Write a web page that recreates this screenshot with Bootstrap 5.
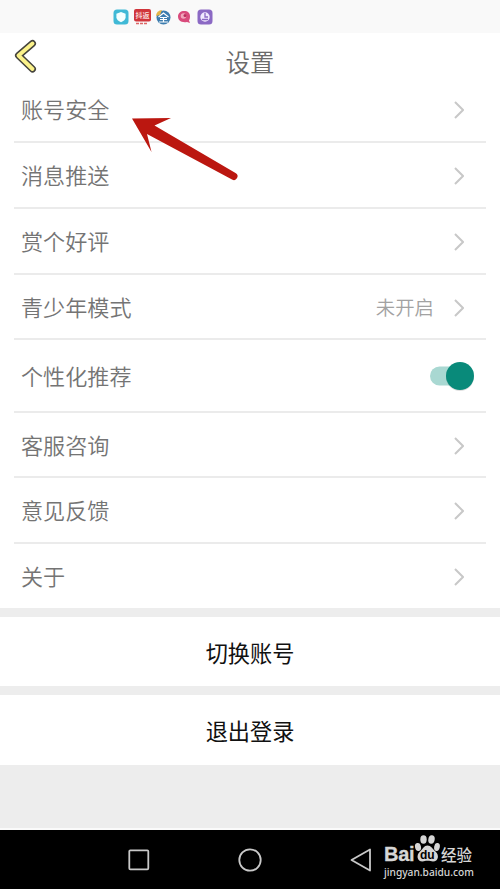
<!DOCTYPE html>
<html lang="zh-CN">
<head>
<meta charset="utf-8">
<meta name="viewport" content="width=device-width, initial-scale=1">
<title>设置</title>
<link href="https://cdn.jsdelivr.net/npm/bootstrap@5.3.0/dist/css/bootstrap.min.css" rel="stylesheet">
<style>
body{font-family:"Liberation Sans","Noto Sans CJK SC",sans-serif;background:#ededed;color:#747474}
.phone{width:500px;height:889px}
.statusbar{height:33px;background:#f9f9f9;padding-left:113px;gap:5px}
.statusbar svg{width:16px;height:16px}
.topbar{height:44px}
.topbar h1{font:350 24.5px/58px "Noto Sans CJK SC",sans-serif;color:#6a6a6a}
.back{left:12px;top:3px}
.settings{padding:0 14px}
.setting{height:66px;padding:0 22px 0 7px;border-bottom:2px solid #ebebeb;font:350 22.1px/1 "Noto Sans CJK SC",sans-serif}
.setting > .me-auto{padding-bottom:1px}
.setting.h65{height:65px}
.setting.tall{height:73px;padding-right:12px}
.setting.end{height:64px;border:0}
.chev{margin-top:2px}
.state{font-size:19.4px;color:#a2a2a2;margin-right:20px;padding-top:1px}
.switch{width:45px;height:30px}
.account-btn{height:69px;margin-top:9px;padding:1px 0 0;font:400 22.2px/1 "Noto Sans CJK SC",sans-serif;color:#111}
.account-btn + .account-btn{height:70px}
.navkeys{height:61px;border-top:2px solid #fafafa;background:#000;}
.pointer{left:125px;top:110px}
.keys{left:0;top:0}
.brand{left:384px;top:4px;width:92px;color:#d6d6d6}
.brand-row{height:29px}
.bai{font:bold 20px/18px "Liberation Sans",sans-serif;letter-spacing:-.3px;width:30px;-webkit-text-stroke:.3px #d6d6d6}
.jy{font:500 15.5px/18px "Noto Sans CJK SC",sans-serif}
.site{font:500 10.2px/14px "Noto Sans",sans-serif;margin-top:2px}
</style>
<script src="https://cdn.jsdelivr.net/npm/bootstrap@5.3.0/dist/js/bootstrap.bundle.min.js"></script>
</head>
<body>
<main class="phone position-relative overflow-hidden d-flex flex-column">
  <div class="statusbar d-flex align-items-center">
    <svg viewBox="0 0 16 16"><rect x=".5" y=".5" width="15" height="15" rx="3.5" fill="#40b9d6"/><path d="M8 3l4.6 1.7v3.6c0 2.3-2 3.9-4.6 5-2.6-1.1-4.6-2.7-4.6-5V4.700z" fill="#f4ffff"/></svg>
    <svg class="overflow-visible" viewBox="0 0 16 16"><rect x="0" y="0" width="17" height="12.500" rx="2" fill="#d0353b"/><text x="8.500" y="9" font-size="7" font-weight="700" text-anchor="middle" fill="#f6d5d5" font-family="Noto Sans CJK SC">抖返</text><path d="M2 14.500h12" stroke="#d66" stroke-width="1.500" stroke-dasharray="3 1"/></svg>
    <svg viewBox="0 0 16 16"><circle cx="8.500" cy="8.500" r="7" fill="#3c7cae"/><path d="M1 7a6 6 0 0 1 6-6L5 6z" fill="#e5b548"/><path d="M3.500 8L8.500 4l5 4M5 8.500h7M5 10.500h7M4 13h9M8.500 8.500V13" stroke="#fff" stroke-width="1.200" fill="none"/></svg>
    <svg viewBox="0 0 16 16"><path d="M8 2c4 0 6 2 6 5.500 0 2-.5 3-1 4l1 2.500-3-1C5 14 2 11 2 7.500 2 4 5 2 8 2z" fill="#d94b7c"/><circle cx="7.500" cy="7" r="2.800" fill="#f1a6bc"/><circle cx="9" cy="6.500" r="1.500" fill="#b92d5b"/></svg>
    <svg viewBox="0 0 16 16"><rect x=".5" y=".5" width="15" height="15" rx="3.500" fill="#8b69c4"/><circle cx="8" cy="8" r="4.700" fill="#f1eaff"/><path d="M8 4v4h3M5 10.500h6" stroke="#8b69c4" fill="none" stroke-width="1.300"/></svg>
  </div>
  <header class="topbar position-relative bg-white text-center">
    <svg class="back position-absolute" width="28" height="40" viewBox="0 0 28 40"><path d="M20.500 7.500L6.500 19.500l14 13.500" fill="none" stroke="#45443d" stroke-width="7" stroke-linecap="round" stroke-linejoin="round"/><path d="M20.500 7.500L6.500 19.500l14 13.500" fill="none" stroke="#fbf28a" stroke-width="3.900" stroke-linecap="round" stroke-linejoin="round"/></svg>
    <h1 class="m-0">设置</h1>
  </header>
  <section class="settings bg-white">
    <div class="setting d-flex align-items-center"><span class="me-auto">账号安全</span><svg class="chev" width="10" height="18" viewBox="0 0 10 18"><path d="M1 1l8 8-8 8" fill="none" stroke="#c8c8c8" stroke-width="2"/></svg></div>
    <div class="setting d-flex align-items-center"><span class="me-auto">消息推送</span><svg class="chev" width="10" height="18" viewBox="0 0 10 18"><path d="M1 1l8 8-8 8" fill="none" stroke="#c8c8c8" stroke-width="2"/></svg></div>
    <div class="setting d-flex align-items-center"><span class="me-auto">赏个好评</span><svg class="chev" width="10" height="18" viewBox="0 0 10 18"><path d="M1 1l8 8-8 8" fill="none" stroke="#c8c8c8" stroke-width="2"/></svg></div>
    <div class="setting h65 d-flex align-items-center"><span class="me-auto">青少年模式</span><span class="state">未开启</span><svg class="chev" width="10" height="18" viewBox="0 0 10 18"><path d="M1 1l8 8-8 8" fill="none" stroke="#c8c8c8" stroke-width="2"/></svg></div>
    <div class="setting tall d-flex align-items-center"><span class="me-auto">个性化推荐</span><svg class="switch" viewBox="0 0 45 30" role="img" aria-label="已开启"><rect x="1" y="5.500" width="36" height="19" rx="9.500" fill="#a9d8d2"/><circle cx="31" cy="16" r="14" fill="#000" opacity=".13"/><circle cx="31" cy="15" r="14" fill="#098a7a"/></svg></div>
    <div class="setting h65 d-flex align-items-center"><span class="me-auto">客服咨询</span><svg class="chev" width="10" height="18" viewBox="0 0 10 18"><path d="M1 1l8 8-8 8" fill="none" stroke="#c8c8c8" stroke-width="2"/></svg></div>
    <div class="setting d-flex align-items-center"><span class="me-auto">意见反馈</span><svg class="chev" width="10" height="18" viewBox="0 0 10 18"><path d="M1 1l8 8-8 8" fill="none" stroke="#c8c8c8" stroke-width="2"/></svg></div>
    <div class="setting end d-flex align-items-center"><span class="me-auto">关于</span><svg class="chev" width="10" height="18" viewBox="0 0 10 18"><path d="M1 1l8 8-8 8" fill="none" stroke="#c8c8c8" stroke-width="2"/></svg></div>
  </section>
  <button class="account-btn btn rounded-0 border-0 bg-white w-100">切换账号</button>
  <button class="account-btn btn rounded-0 border-0 bg-white w-100">退出登录</button>
  <footer class="navkeys mt-auto position-relative">
    <svg class="keys position-absolute" width="380" height="59" viewBox="0 0 380 59" fill="none" stroke="#c9c9c9" stroke-width="1.800"><rect x="129.300" y="20.300" width="19" height="19" rx="1"/><circle cx="250" cy="30" r="10.700"/><path d="M370 19.500v21L351.500 30z" stroke-linejoin="round"/></svg>
    <div class="brand position-absolute">
      <div class="brand-row d-flex align-items-end">
        <span class="bai">Bai</span>
        <svg width="27" height="29" viewBox="0 0 27 29"><g fill="#d6d6d6"><ellipse cx="4" cy="13" rx="3" ry="4" transform="rotate(-12 4 13)"/><ellipse cx="9.500" cy="5.500" rx="3.200" ry="4.200"/><ellipse cx="17.500" cy="5.500" rx="3.200" ry="4.200" transform="rotate(10 17.500 5.500)"/><ellipse cx="23" cy="13" rx="2.800" ry="4" transform="rotate(12 23 13)"/><path d="M13.500 11.500c3.500 0 5 3.500 8 6 4 3.500 3 10-2.500 10-2 0-3-.7-5.500-.7s-3 .7-5 .7c-5.500 0-6.500-6.500-2.500-10 3-2.500 4-6 7.500-6z"/></g><text x="13.300" y="25" text-anchor="middle" font-family="Liberation Sans" font-weight="700" font-size="12" fill="#000">du</text></svg>
        <span class="jy text-nowrap">经验</span>
      </div>
      <div class="site text-nowrap">jingyan.baidu.com</div>
    </div>
  </footer>
  <svg class="pointer position-absolute" width="120" height="80" viewBox="0 0 120 80"><path d="M7 8.500L46 8 29.500 15.500 110.500 63a3.700 3.700 0 0 1-3.500 6.600L22 24 26.500 42z" fill="#bb1710"/></svg>
</main>
</body>
</html>
